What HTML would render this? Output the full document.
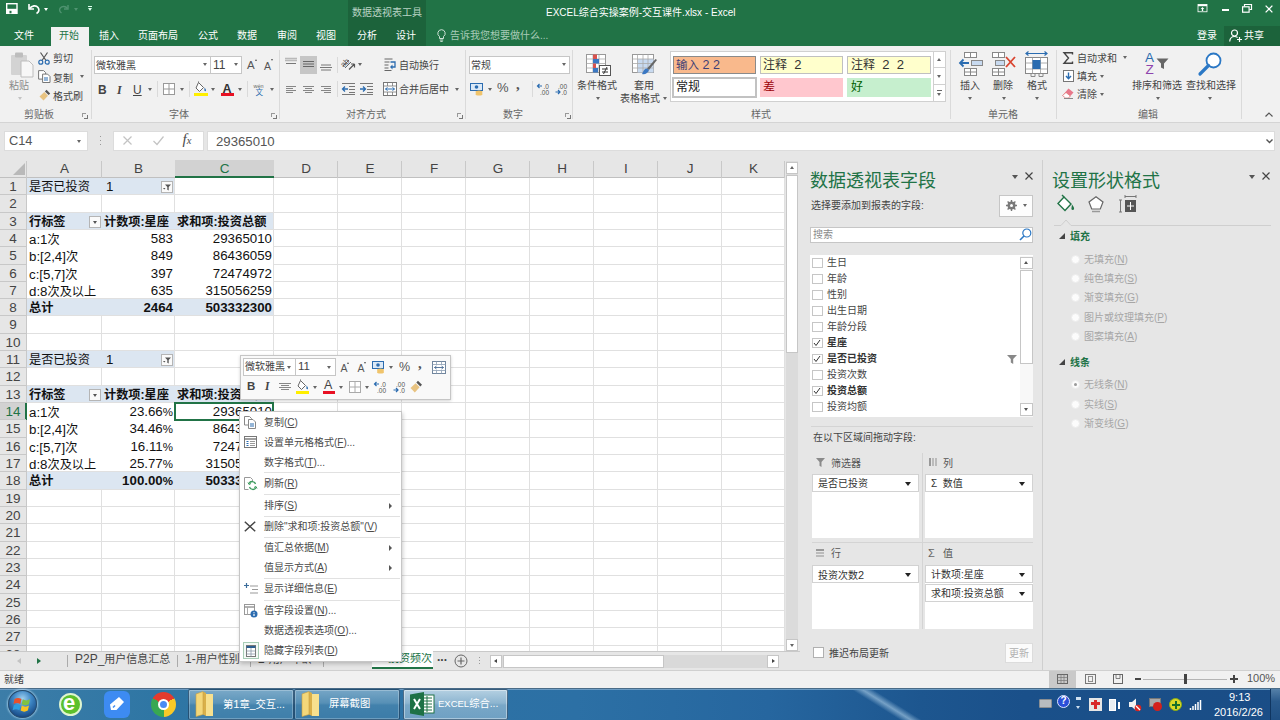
<!DOCTYPE html>
<html lang="zh-CN">
<head>
<meta charset="utf-8">
<title>EXCEL综合实操案例-交互课件.xlsx - Excel</title>
<style>
*{box-sizing:border-box;margin:0;padding:0}
html,body{width:1280px;height:720px;overflow:hidden;background:#e6e6e6}
body{position:relative;font-family:"Liberation Sans","Noto Sans CJK SC",sans-serif;font-size:11px;color:#333;line-height:1}
.a{position:absolute}
.t{position:absolute;white-space:nowrap;line-height:1}
.w{color:#fff}
svg{position:absolute;overflow:visible}
.l{font-size:109%}
/* title */
#title{left:0;top:0;width:1280px;height:46px;background:#217346}
#ctx{left:348px;top:0;width:78px;height:46px;background:#1c633b}
.tab{position:absolute;top:30px;color:#fff;font-size:10px;white-space:nowrap;line-height:12px}
#home{left:51px;top:27px;width:38px;height:20px;background:#f1f1f1}
/* ribbon */
#ribbon{left:0;top:46px;width:1280px;height:77px;background:#f1f1f1;border-bottom:1px solid #d4d4d4}
.rl{position:absolute;font-size:10px;color:#444;white-space:nowrap;line-height:14px}
.gl{position:absolute;font-size:10px;color:#666;white-space:nowrap;line-height:12px;top:109px}
.sep{position:absolute;top:50px;width:1px;height:69px;background:#dadada}
.dd{position:absolute;width:0;height:0;border-left:2.5px solid transparent;border-right:2.5px solid transparent;border-top:3px solid #666}
.launch{position:absolute;top:113px;width:4px;height:4px;border-left:1px solid #999;border-top:1px solid #999}
.launch:after{content:"";position:absolute;left:1px;top:1px;width:3px;height:3px;border-right:1px solid #777;border-bottom:1px solid #777}
</style>
</head>
<body>
<!-- ============ TITLE BAR ============ -->
<div id="title" class="a"></div>
<div id="ctx" class="a"></div>
<div class="t" style="left:352px;top:8px;font-size:10px;color:#b9d3c4">数据透视表工具</div>
<div class="t w" style="left:546px;top:8px;font-size:10px">EXCEL综合实操案例-交互课件.xlsx - Excel</div>
<!-- quick access -->
<svg style="left:6px;top:3px" width="12" height="11" viewBox="0 0 12 11"><rect x=".7" y=".7" width="10.300" height="9.600" fill="none" stroke="#fff" stroke-width="1.400"/><rect x=".7" y="5.800" width="10.300" height="4.500" fill="#fff"/><rect x="3.500" y="7.800" width="2" height="2.500" fill="#217346"/></svg>
<svg style="left:28px;top:3px" width="13" height="12" viewBox="0 0 13 12"><path d="M1 1v5h5" fill="none" stroke="#fff" stroke-width="1.6"/><path d="M1.5 5.5C4 2.5 8 2 10 4.5c1.6 2 1 4.5-1.5 6" fill="none" stroke="#fff" stroke-width="1.7"/></svg>
<div class="dd" style="left:44px;top:8px;border-top-color:#fff"></div>
<svg style="left:58px;top:4px" width="11" height="10" viewBox="0 0 11 10"><path d="M10 1v4h-4" fill="none" stroke="#4f9370" stroke-width="1.4"/><path d="M9.5 4.5C7.5 2 4 2 2.3 4c-1.3 1.7-.8 3.6 1.2 5" fill="none" stroke="#4f9370" stroke-width="1.4"/></svg>
<div class="dd" style="left:74px;top:8px;border-top-color:#4f9370"></div>
<div class="a" style="left:88px;top:6px;width:4px;height:1px;background:#dfe"></div>
<div class="dd" style="left:88px;top:8px;border-width:3px 2px 0 2px;border-top-color:#dfe"></div>
<!-- window buttons -->
<svg style="left:1197px;top:4px" width="11" height="9" viewBox="0 0 12 11"><rect x=".5" y=".5" width="11" height="9" fill="none" stroke="#fff" stroke-width="1"/><rect x=".5" y=".5" width="11" height="2.2" fill="#fff"/><path d="M6 3.8l2.2 2.4h-1.4v2.3h-1.6v-2.3h-1.4z" fill="#fff"/></svg>
<div class="a" style="left:1222px;top:9px;width:7px;height:2px;background:#fff"></div>
<svg style="left:1242px;top:3.500px" width="10" height="9" viewBox="0 0 10 9"><path d="M2.5 2.5v-2h7v5h-2" fill="none" stroke="#fff" stroke-width="1.2"/><rect x=".6" y="2.8" width="6.5" height="5.4" fill="none" stroke="#fff" stroke-width="1.2"/></svg>
<svg style="left:1265px;top:4.500px" width="8" height="8" viewBox="0 0 9 9"><path d="M.7 .7l7.6 7.6M8.3 .7l-7.6 7.6" stroke="#fff" stroke-width="1.5"/></svg>
<!-- tabs -->
<div id="home" class="a"></div>
<div class="tab" style="left:14px">文件</div>
<div class="tab" style="left:59px;color:#217346">开始</div>
<div class="tab" style="left:99px">插入</div>
<div class="tab" style="left:138px">页面布局</div>
<div class="tab" style="left:198px">公式</div>
<div class="tab" style="left:237px">数据</div>
<div class="tab" style="left:277px">审阅</div>
<div class="tab" style="left:316px">视图</div>
<div class="tab" style="left:357px">分析</div>
<div class="tab" style="left:396px">设计</div>
<svg style="left:437px;top:29px" width="9" height="13" viewBox="0 0 9 13"><path d="M4.5 .7a3.7 3.7 0 0 0-2 6.8v2h4v-2a3.7 3.7 0 0 0-2-6.8z" fill="none" stroke="#cfe3d7" stroke-width="1"/><path d="M2.8 11h3.4M3.3 12.4h2.4" stroke="#cfe3d7" stroke-width="1"/></svg>
<div class="tab" style="left:450px;color:#a9cbb8">告诉我您想要做什么...</div>
<div class="tab" style="left:1197px">登录</div>
<div class="a" style="left:1224px;top:26px;width:56px;height:20px;background:#1c633b"></div>
<svg style="left:1229px;top:29px" width="13" height="13" viewBox="0 0 13 13"><circle cx="5.5" cy="4" r="3" fill="none" stroke="#fff" stroke-width="1.2"/><path d="M.7 12.5c.3-3.4 2.3-5 4.8-5 1.3 0 2.3.4 3.100 1" fill="none" stroke="#fff" stroke-width="1.2"/><path d="M10.500 8v5M8 10.500h5" stroke="#fff" stroke-width="1.200"/></svg>
<div class="tab" style="left:1244px">共享</div>
<!-- ============ RIBBON ============ -->
<div id="ribbon" class="a"></div>
<!-- clipboard group -->
<svg style="left:10px;top:52px" width="24" height="26" viewBox="0 0 24 26"><rect x="1" y="3" width="16" height="20" rx="1" fill="#d3d3d3"/><rect x="5" y="0.500" width="8" height="5" rx="1" fill="#bdbdbd"/><path d="M11 9h8l4 4v12h-12z" fill="#f7f7f7" stroke="#bdbdbd" stroke-width="1"/></svg>
<div class="rl" style="left:9px;top:79px;color:#8a8a8a">粘贴</div>
<div class="dd" style="left:18px;top:97px;border-top-color:#c4c4c4"></div>
<svg style="left:38px;top:52px" width="12" height="13" viewBox="0 0 12 13"><path d="M2.500 .5l5.500 8M9.500 .5l-5.500 8" stroke="#555" stroke-width="1.2" fill="none"/><circle cx="2.800" cy="10.200" r="2" fill="none" stroke="#2b6cb0" stroke-width="1.2"/><circle cx="9.200" cy="10.200" r="2" fill="none" stroke="#2b6cb0" stroke-width="1.200"/></svg>
<div class="rl" style="left:53px;top:52px">剪切</div>
<svg style="left:38px;top:70px" width="13" height="13" viewBox="0 0 13 13"><path d="M.6 .6h5l2 2v6.500h-7z" fill="#fff" stroke="#777" stroke-width="1"/><path d="M4.600 4.100h5l2.400 2.400v6h-7.400z" fill="#fff" stroke="#777" stroke-width="1"/><path d="M6 8h4M6 10h4" stroke="#2b6cb0" stroke-width="1"/></svg>
<div class="rl" style="left:53px;top:71.500px">复制</div>
<div class="dd" style="left:80px;top:75px"></div>
<svg style="left:39px;top:89px" width="12" height="12" viewBox="0 0 12 12"><path d="M7.500 .8l3.700 3.700-1.600 1.600-3.700-3.700z" fill="#555"/><path d="M5.300 3l3.700 3.700-4.500 4.800-4-4z" fill="#e8c381"/></svg>
<div class="rl" style="left:53px;top:90px">格式刷</div>
<div class="gl" style="left:24px">剪贴板</div>
<div class="launch" style="left:82px"></div>
<div class="sep" style="left:91px"></div>
<!-- font group -->
<div class="a" style="left:94px;top:56px;width:117px;height:18px;background:#fff;border:1px solid #c6c6c6"></div>
<div class="rl" style="left:96px;top:59px">微软雅黑</div>
<div class="dd" style="left:203px;top:63px"></div>
<div class="a" style="left:210px;top:56px;width:32px;height:18px;background:#fff;border:1px solid #c6c6c6"></div>
<div class="rl" style="left:213px;top:58px;font-size:12px">11</div>
<div class="dd" style="left:234px;top:63px"></div>
<div class="rl" style="left:247px;top:58px;font-size:11.500px;color:#555">A</div><div class="a" style="left:254.500px;top:59px;border-left:1.500px solid transparent;border-right:1.500px solid transparent;border-bottom:2px solid #555"></div>
<div class="rl" style="left:264px;top:59px;font-size:10.500px;color:#555">A</div><div class="a" style="left:270.500px;top:59px;border-left:1.500px solid transparent;border-right:1.500px solid transparent;border-top:2px solid #555"></div>
<div class="rl" style="left:98px;top:83px;font-size:12px;font-weight:bold;color:#444">B</div>
<div class="rl" style="left:117px;top:83px;font-size:12px;font-style:italic;font-weight:bold;font-family:'Liberation Serif',serif;color:#444">I</div>
<div class="rl" style="left:133px;top:83px;font-size:12px;color:#444;text-decoration:underline">U</div>
<div class="dd" style="left:148px;top:88px"></div>
<div class="a" style="left:157px;top:81px;width:1px;height:16px;background:#dadada"></div>
<svg style="left:163px;top:83px" width="12" height="12" viewBox="0 0 12 12"><rect x=".5" y=".5" width="11" height="11" fill="#fff" stroke="#999"/><path d="M6 .5v11M.5 6h11" stroke="#999"/></svg>
<div class="dd" style="left:180px;top:88px"></div>
<div class="a" style="left:189px;top:81px;width:1px;height:16px;background:#dadada"></div>
<svg style="left:194px;top:81px" width="15" height="15" viewBox="0 0 15 15"><path d="M4.500 1.500l5 5-4 4-3.500-3.500z" fill="#fff" stroke="#666" stroke-width="1"/><path d="M4.500 1.500v-1" stroke="#666"/><path d="M10.500 6.500c1.500 1.800 2 2.800 1.200 3.500-.7.500-1.500 0-1.300-1z" fill="#2b6cb0"/><rect x="0" y="12" width="14" height="3" fill="#ffef00"/></svg>
<div class="dd" style="left:211px;top:88px"></div>
<div class="rl" style="left:222.500px;top:81.500px;font-size:12.500px;color:#333;font-weight:bold">A</div>
<div class="a" style="left:221px;top:93px;width:13px;height:3px;background:#e81123"></div>
<div class="dd" style="left:238px;top:88px"></div>
<div class="a" style="left:247px;top:81px;width:1px;height:16px;background:#dadada"></div>
<div class="t" style="left:253.500px;top:84px;font-size:5.500px;color:#666;line-height:5px">wén</div>
<div class="t" style="left:255.500px;top:88.500px;font-size:7.500px;color:#2b6cb0;line-height:8px">文</div>
<div class="dd" style="left:270px;top:88px"></div>
<div class="gl" style="left:169px">字体</div>
<div class="launch" style="left:271px"></div>
<div class="sep" style="left:279px"></div>
<!-- alignment group -->
<div class="a" style="left:300px;top:56px;width:17px;height:18px;background:#c6c6c6"></div>
<svg style="left:285px;top:57px" width="50" height="16" viewBox="0 0 50 16"><path d="M0 1.500h12M0 3.500h12" stroke="#b9b9b9" stroke-width="1.600"/><path d="M1 6.500h10" stroke="#777"/><path d="M18 4.500h11M18 7h11M18 9.500h11" stroke="#666"/><path d="M36 8h10M35 10.500h12M36 13h10" stroke="#777"/></svg>
<div class="a" style="left:337px;top:57px;width:1px;height:16px;background:#dadada"></div>
<svg style="left:342px;top:57px" width="14" height="14" viewBox="0 0 14 14"><path d="M1 9l6-6M3 11l6-6" stroke="#666" stroke-width="1"/><text x="0" y="9" font-size="8" font-family="Liberation Sans, sans-serif" fill="#555" transform="rotate(-45 3 8)">ab</text><path d="M7 12.500l5.500-5.500M12.500 7v3.500M12.500 7h-3.500" stroke="#555" stroke-width="1.200" fill="none"/></svg>
<div class="dd" style="left:358px;top:63px"></div>
<svg style="left:384px;top:58px" width="13" height="13" viewBox="0 0 13 13"><path d="M.5 1h8M.5 4h5M.5 7h4M.5 10h4M.5 12.500h7" stroke="#666"/><path d="M6.500 4h4.500v5h-4" fill="none" stroke="#2b6cb0" stroke-width="1.300"/><path d="M8.500 6.500l-2.500 2.500 2.500 2.500z" fill="#2b6cb0"/></svg>
<div class="rl" style="left:399px;top:59px">自动换行</div>
<svg style="left:286px;top:85px" width="46" height="9" viewBox="0 0 46 9"><path d="M0 1.500h10M0 3.500h7M0 5.500h10M0 7.500h7" stroke="#7a7a7a" stroke-width=".9"/><path d="M17 1.500h11M19 3.500h7M17 5.500h11M19 7.500h7" stroke="#7a7a7a" stroke-width=".9"/><path d="M35 1.500h10M38 3.500h7M35 5.500h10M38 7.500h7" stroke="#7a7a7a" stroke-width=".9"/></svg>
<div class="a" style="left:337px;top:81px;width:1px;height:16px;background:#dadada"></div>
<svg style="left:342px;top:83px" width="32" height="12" viewBox="0 0 32 12"><path d="M0 .5h13M7 3.500h6M7 6.500h6M7 9.500h6M0 11.500h13" stroke="#777"/><path d="M6 6h-5.500M3 3.500l-2.500 2.500 2.500 2.500" stroke="#2b6cb0" stroke-width="1.300" fill="none"/><path d="M18 .5h13M25 3.500h6M25 6.500h6M25 9.500h6M18 11.500h13" stroke="#777"/><path d="M18 6h5.500M21 3.500l2.500 2.500-2.500 2.500" stroke="#2b6cb0" stroke-width="1.300" fill="none"/></svg>
<svg style="left:383px;top:82px" width="14" height="14" viewBox="0 0 14 14"><rect x=".5" y=".5" width="13" height="13" fill="#fff" stroke="#777"/><path d="M.5 4h13M.5 10h13M4.500 .5v3.500M9.500 .5v3.500M4.500 10v3.500M9.500 10v3.500" stroke="#777" stroke-width=".8"/><path d="M2.500 7h9M4.500 5.500l-2 1.500 2 1.500M9.500 5.500l2 1.500-2 1.500" stroke="#2b6cb0" stroke-width="1" fill="none"/></svg>
<div class="rl" style="left:399px;top:83px">合并后居中</div>
<div class="dd" style="left:455px;top:88px"></div>
<div class="gl" style="left:346px">对齐方式</div>
<div class="launch" style="left:457px"></div>
<div class="sep" style="left:465px"></div>
<!-- number group -->
<div class="a" style="left:469px;top:56px;width:101px;height:18px;background:#fff;border:1px solid #c6c6c6"></div>
<div class="rl" style="left:471px;top:59px">常规</div>
<div class="dd" style="left:562px;top:63px"></div>
<svg style="left:470px;top:83px" width="14" height="13" viewBox="0 0 14 13"><rect x=".5" y=".5" width="12" height="7" fill="#dbe9f7" stroke="#2b6cb0"/><circle cx="6.500" cy="4" r="1.800" fill="#2b6cb0"/><ellipse cx="9" cy="9" rx="3.500" ry="1.500" fill="#f0c46c"/><ellipse cx="9" cy="11" rx="3.500" ry="1.500" fill="#f0c46c"/></svg>
<div class="dd" style="left:488px;top:88px"></div>
<div class="rl" style="left:497px;top:81px;font-size:13px;color:#555">%</div>
<div class="rl" style="left:516px;top:77px;font-size:15px;font-weight:bold;color:#555;font-family:'Liberation Serif',serif">,</div>
<div class="a" style="left:532px;top:81px;width:1px;height:16px;background:#dadada"></div>
<svg style="left:537px;top:83px" width="13" height="12" viewBox="0 0 13 12"><path d="M.5 3h4.500M2.500 1l-2 2 2 2" fill="none" stroke="#2b6cb0" stroke-width="1.200"/><text x="6.500" y="5.500" font-size="6.500" font-family="Liberation Sans, sans-serif" fill="#555">.0</text><text x="3" y="11.500" font-size="6.500" font-family="Liberation Sans, sans-serif" fill="#555">.00</text></svg>
<svg style="left:555px;top:83px" width="13" height="12" viewBox="0 0 13 12"><text x="3" y="5.500" font-size="6.500" font-family="Liberation Sans, sans-serif" fill="#555">.00</text><path d="M.5 9h4.500M3 7l2 2-2 2" fill="none" stroke="#2b6cb0" stroke-width="1.200"/><text x="6.500" y="11.500" font-size="6.500" font-family="Liberation Sans, sans-serif" fill="#555">.0</text></svg>
<div class="gl" style="left:503px">数字</div>
<div class="launch" style="left:565px"></div>
<div class="sep" style="left:572px"></div>
<!-- styles group -->
<svg style="left:586px;top:54px" width="26" height="22" viewBox="0 0 26 22"><rect x=".5" y=".5" width="19" height="18" fill="#fff" stroke="#999"/><path d="M.5 5h19M.5 9.500h19M.5 14h19M7 .5v18M13 .5v18" stroke="#aaa" stroke-width=".8"/><rect x="7" y=".5" width="4" height="4.500" fill="#d9534f"/><rect x="7" y="5" width="6" height="4.500" fill="#3b78c3"/><rect x="7" y="9.500" width="3" height="4.500" fill="#d9534f"/><rect x="7" y="14" width="5" height="4.500" fill="#3b78c3"/><rect x="13.500" y="11.500" width="11" height="10" fill="#fff" stroke="#555"/><path d="M16 15h6M16 18h6M21 13l-3.500 7" stroke="#333" stroke-width="1"/></svg>
<div class="rl" style="left:577px;top:79px">条件格式</div>
<div class="dd" style="left:596px;top:97px"></div>
<svg style="left:632px;top:54px" width="27" height="23" viewBox="0 0 27 23"><rect x=".5" y=".5" width="21" height="18" fill="#fff" stroke="#999"/><rect x="5.500" y="5" width="16" height="13.500" fill="#c8daf0"/><path d="M.5 5h21M.5 9.500h21M.5 14h21M5.500 .5v18M11 .5v18M16 .5v18" stroke="#aaa" stroke-width=".8"/><path d="M25 6l-8 10-2-1.500 8.500-9.500z" fill="#666"/><path d="M15 14.500c-2.500 0-3.500 2-5 5.500 3 .8 6-.8 7-4z" fill="#3b78c3"/></svg>
<div class="rl" style="left:634px;top:79px">套用</div>
<div class="rl" style="left:620px;top:92px">表格格式</div>
<div class="dd" style="left:663px;top:97px"></div>
<div class="a" style="left:670px;top:51px;width:276px;height:51px;background:#fff;border:1px solid #d0d0d0"></div>
<div class="a" style="left:673px;top:56px;width:83px;height:18px;background:#f9b98c;border:1px solid #8a8a8a"></div>
<div class="t" style="left:676px;top:59px;font-size:11.5px;color:#3f3f76">输入<span class="l"> 2 2</span></div>
<div class="a" style="left:760px;top:56px;width:83px;height:18px;background:#ffffcc;border:1px solid #c0c0c0"></div>
<div class="t" style="left:763px;top:58px;font-size:12px;color:#333">注释<span class="l">&nbsp; 2</span></div>
<div class="a" style="left:847px;top:56px;width:84px;height:18px;background:#ffffcc;border:1px solid #c0c0c0"></div>
<div class="t" style="left:851px;top:58px;font-size:12px;color:#333">注释<span class="l">&nbsp; 2&nbsp; 2</span></div>
<div class="a" style="left:672px;top:77px;width:85px;height:21px;background:#fff;border:2px solid #c2c2c2"></div>
<div class="t" style="left:676px;top:81px;font-size:12px;color:#222">常规</div>
<div class="a" style="left:760px;top:78px;width:83px;height:19px;background:#ffc7ce"></div>
<div class="t" style="left:763px;top:81px;font-size:12px;color:#9c0006">差</div>
<div class="a" style="left:847px;top:78px;width:84px;height:19px;background:#c6efce"></div>
<div class="t" style="left:851px;top:81px;font-size:12px;color:#006100">好</div>
<div class="a" style="left:933px;top:51px;width:13px;height:17px;background:#fff;border:1px solid #d0d0d0"></div>
<div class="a" style="left:933px;top:67px;width:13px;height:18px;background:#fff;border:1px solid #d0d0d0"></div>
<div class="a" style="left:933px;top:84px;width:13px;height:18px;background:#fff;border:1px solid #d0d0d0"></div>
<div class="a" style="left:937px;top:58px;border-left:2.500px solid transparent;border-right:2.500px solid transparent;border-bottom:3px solid #666"></div>
<div class="dd" style="left:937px;top:75px"></div>
<div class="a" style="left:937px;top:90px;width:5px;height:1px;background:#666"></div>
<div class="dd" style="left:937px;top:93px"></div>
<div class="gl" style="left:751px">样式</div>
<div class="sep" style="left:950px"></div>
<!-- cells group -->
<svg style="left:958px;top:52px" width="25" height="25" viewBox="0 0 25 25"><rect x="6.500" y=".5" width="12" height="5" fill="#fff" stroke="#888"/><path d="M12.500 .5v5" stroke="#888"/><rect x="13.500" y="8.500" width="11" height="5" fill="#c8daf0" stroke="#888"/><rect x="6.500" y="16.500" width="12" height="7" fill="#fff" stroke="#888"/><path d="M12.500 16.500v7M6.500 20h12" stroke="#888"/><path d="M11 11h-9M5.500 7.500l-3.500 3.500 3.500 3.500" fill="none" stroke="#2b6cb0" stroke-width="1.800"/></svg>
<div class="rl" style="left:960px;top:79px">插入</div>
<div class="dd" style="left:968px;top:97px"></div>
<svg style="left:992px;top:52px" width="25" height="25" viewBox="0 0 25 25"><rect x=".5" y=".5" width="12" height="5" fill="#fff" stroke="#888"/><path d="M6.500 .5v5" stroke="#888"/><rect x="3.500" y="8.500" width="9" height="5" fill="#c8daf0" stroke="#888"/><rect x=".5" y="16.500" width="12" height="7" fill="#fff" stroke="#888"/><path d="M6.500 16.500v7M.5 20h12" stroke="#888"/><path d="M14 5l9 10M23 5l-9 10" stroke="#d9442f" stroke-width="1.800"/></svg>
<div class="rl" style="left:993px;top:79px">删除</div>
<div class="dd" style="left:1002px;top:97px"></div>
<svg style="left:1025px;top:51px" width="24" height="26" viewBox="0 0 24 26"><path d="M1 2.500h21M3.500 .5l-2.500 2 2.500 2M19.500 .5l2.500 2-2.500 2" fill="none" stroke="#2b6cb0" stroke-width="1.200"/><rect x=".5" y="6.500" width="22" height="16" fill="#fff" stroke="#888"/><path d="M7.500 6.500v16M15.500 6.500v16M.5 12h22M.5 18h22" stroke="#999" stroke-width=".8"/><rect x="7.500" y="9" width="8" height="9" fill="#2b6cb0"/><path d="M6 22.500v3h4v-3M14 22.500v3h4v-3" fill="none" stroke="#888"/></svg>
<div class="rl" style="left:1027px;top:79px">格式</div>
<div class="dd" style="left:1035px;top:97px"></div>
<div class="gl" style="left:988px">单元格</div>
<div class="sep" style="left:1056px"></div>
<!-- editing group -->
<svg style="left:1063px;top:52px" width="10" height="12" viewBox="0 0 10 12"><path d="M9.500 2.500v-1.800h-8.500l4.500 5.300-4.500 5.300h8.500v-1.800" fill="none" stroke="#444" stroke-width="1.400"/></svg>
<div class="rl" style="left:1077px;top:52px">自动求和</div>
<div class="dd" style="left:1123px;top:56px"></div>
<svg style="left:1063px;top:70px" width="11" height="12" viewBox="0 0 11 12"><rect x=".5" y=".5" width="10" height="11" fill="#fff" stroke="#777"/><path d="M5.500 2.500v6M3 6l2.500 2.800 2.500-2.800" fill="none" stroke="#2b6cb0" stroke-width="1.400"/></svg>
<div class="rl" style="left:1077px;top:70px">填充</div>
<div class="dd" style="left:1100px;top:75px"></div>
<svg style="left:1062px;top:88px" width="12" height="11" viewBox="0 0 12 11"><path d="M6.500 .5l5 4-5 5.500h-3l-3-2.500z" fill="#e8788a"/><path d="M.5 7.500l3 2.500h3l1.800-2-4.300-3.500z" fill="#fff" stroke="#d66" stroke-width=".6"/><path d="M2 10.500h9" stroke="#888"/></svg>
<div class="rl" style="left:1077px;top:88px">清除</div>
<div class="dd" style="left:1100px;top:93px"></div>
<div class="t" style="left:1145px;top:51px;font-size:13.5px;color:#2b6cb0">A</div>
<div class="t" style="left:1145.5px;top:63px;font-size:13.5px;color:#8e44ad">Z</div>
<svg style="left:1156px;top:58px" width="14" height="12" viewBox="0 0 14 12"><path d="M.5 .5h12l-4.500 5v5.500l-3-1.500v-4z" fill="#666"/></svg>
<div class="rl" style="left:1132px;top:79px">排序和筛选</div>
<div class="dd" style="left:1156px;top:97px"></div>
<svg style="left:1198px;top:52px" width="25" height="24" viewBox="0 0 25 24"><circle cx="15.500" cy="8.500" r="7" fill="#fff" stroke="#2b78c5" stroke-width="1.800"/><path d="M10.500 13.500l-8.500 8.500" stroke="#2b78c5" stroke-width="3.200" stroke-linecap="round"/></svg>
<div class="rl" style="left:1186px;top:79px">查找和选择</div>
<div class="dd" style="left:1208px;top:97px"></div>
<div class="gl" style="left:1138px">编辑</div>
<div class="sep" style="left:1241px"></div>
<svg style="left:1265px;top:112px" width="8" height="5" viewBox="0 0 8 5"><path d="M.5 4.500l3.500-3.500 3.500 3.500" fill="none" stroke="#555" stroke-width="1.200"/></svg>
<!-- ============ FORMULA BAR ============ -->
<div class="a" style="left:4px;top:131px;width:84px;height:20px;background:#fff;border:1px solid #dcdcdc"></div>
<div class="t" style="left:9px;top:135px;font-size:12.8px;color:#555">C14</div>
<div class="dd" style="left:77px;top:140px"></div>
<div class="a" style="left:100px;top:136px;width:1px;height:1px;background:#999;box-shadow:0 4px 0 #999,0 8px 0 #999"></div>
<div class="a" style="left:113px;top:131px;width:91px;height:20px;background:#fff;border:1px solid #dcdcdc"></div>
<svg style="left:123px;top:136px" width="9" height="9" viewBox="0 0 9 9"><path d="M.5 .5l8 8M8.500 .5l-8 8" stroke="#c3c3c3" stroke-width="1.200"/></svg>
<svg style="left:153px;top:136px" width="11" height="9" viewBox="0 0 11 9"><path d="M.5 5l3.500 3.500 6.500-8" fill="none" stroke="#c3c3c3" stroke-width="1.200"/></svg>
<div class="t" style="left:182.500px;top:132px;font-size:15px;font-style:italic;font-family:'Liberation Serif',serif;color:#4a4a4a">f<span style="font-size:10.500px">x</span></div>
<div class="a" style="left:207px;top:131px;width:1068px;height:20px;background:#fff;border:1px solid #dcdcdc"></div>
<div class="t" style="left:216px;top:135px;font-size:13.2px;color:#555">29365010</div>
<svg style="left:1266px;top:139px" width="7" height="5" viewBox="0 0 7 5"><path d="M.5 .5l3 3 3-3" fill="none" stroke="#555" stroke-width="1.400"/></svg>
<!-- ============ GRID ============ -->
<div class="a" style="left:0;top:160px;width:785px;height:491px;background:#fff;overflow:hidden">
<div class="a" style="left:27px;top:17.9px;width:148px;height:17.32px;background:#dce6f1;"></div>
<div class="a" style="left:27px;top:52.54px;width:247px;height:17.32px;background:#dce6f1;border-bottom:1px solid #95b3d7"></div>
<div class="a" style="left:27px;top:139.14px;width:247px;height:17.32px;background:#dce6f1;border-top:1px solid #95b3d7"></div>
<div class="a" style="left:27px;top:191.1px;width:148px;height:17.32px;background:#dce6f1;"></div>
<div class="a" style="left:27px;top:225.74px;width:247px;height:17.32px;background:#dce6f1;border-bottom:1px solid #95b3d7"></div>
<div class="a" style="left:27px;top:312.34px;width:247px;height:17.32px;background:#dce6f1;border-top:1px solid #95b3d7"></div>
<div class="a" style="left:27px;top:34.22px;width:758px;height:1px;background:#e0e0e0"></div>
<div class="a" style="left:27px;top:51.54px;width:758px;height:1px;background:#e0e0e0"></div>
<div class="a" style="left:27px;top:68.86px;width:758px;height:1px;background:#e0e0e0"></div>
<div class="a" style="left:27px;top:86.18px;width:758px;height:1px;background:#e0e0e0"></div>
<div class="a" style="left:27px;top:103.5px;width:758px;height:1px;background:#e0e0e0"></div>
<div class="a" style="left:27px;top:120.82px;width:758px;height:1px;background:#e0e0e0"></div>
<div class="a" style="left:27px;top:138.14px;width:758px;height:1px;background:#e0e0e0"></div>
<div class="a" style="left:27px;top:155.46px;width:758px;height:1px;background:#e0e0e0"></div>
<div class="a" style="left:27px;top:172.78px;width:758px;height:1px;background:#e0e0e0"></div>
<div class="a" style="left:27px;top:190.1px;width:758px;height:1px;background:#e0e0e0"></div>
<div class="a" style="left:27px;top:207.42px;width:758px;height:1px;background:#e0e0e0"></div>
<div class="a" style="left:27px;top:224.74px;width:758px;height:1px;background:#e0e0e0"></div>
<div class="a" style="left:27px;top:242.06px;width:758px;height:1px;background:#e0e0e0"></div>
<div class="a" style="left:27px;top:259.38px;width:758px;height:1px;background:#e0e0e0"></div>
<div class="a" style="left:27px;top:276.7px;width:758px;height:1px;background:#e0e0e0"></div>
<div class="a" style="left:27px;top:294.02px;width:758px;height:1px;background:#e0e0e0"></div>
<div class="a" style="left:27px;top:311.34px;width:758px;height:1px;background:#e0e0e0"></div>
<div class="a" style="left:27px;top:328.66px;width:758px;height:1px;background:#e0e0e0"></div>
<div class="a" style="left:27px;top:345.98px;width:758px;height:1px;background:#e0e0e0"></div>
<div class="a" style="left:27px;top:363.3px;width:758px;height:1px;background:#e0e0e0"></div>
<div class="a" style="left:27px;top:380.62px;width:758px;height:1px;background:#e0e0e0"></div>
<div class="a" style="left:27px;top:397.94px;width:758px;height:1px;background:#e0e0e0"></div>
<div class="a" style="left:27px;top:415.26px;width:758px;height:1px;background:#e0e0e0"></div>
<div class="a" style="left:27px;top:432.58px;width:758px;height:1px;background:#e0e0e0"></div>
<div class="a" style="left:27px;top:449.9px;width:758px;height:1px;background:#e0e0e0"></div>
<div class="a" style="left:27px;top:467.22px;width:758px;height:1px;background:#e0e0e0"></div>
<div class="a" style="left:27px;top:484.54px;width:758px;height:1px;background:#e0e0e0"></div>
<div class="a" style="left:27px;top:501.86px;width:758px;height:1px;background:#e0e0e0"></div>
<div class="a" style="left:101px;top:17.9px;width:1px;height:480px;background:#e0e0e0"></div>
<div class="a" style="left:174px;top:17.9px;width:1px;height:480px;background:#e0e0e0"></div>
<div class="a" style="left:273px;top:17.9px;width:1px;height:480px;background:#e0e0e0"></div>
<div class="a" style="left:337px;top:17.9px;width:1px;height:480px;background:#e0e0e0"></div>
<div class="a" style="left:401px;top:17.9px;width:1px;height:480px;background:#e0e0e0"></div>
<div class="a" style="left:465px;top:17.9px;width:1px;height:480px;background:#e0e0e0"></div>
<div class="a" style="left:529px;top:17.9px;width:1px;height:480px;background:#e0e0e0"></div>
<div class="a" style="left:593px;top:17.9px;width:1px;height:480px;background:#e0e0e0"></div>
<div class="a" style="left:657px;top:17.9px;width:1px;height:480px;background:#e0e0e0"></div>
<div class="a" style="left:721px;top:17.9px;width:1px;height:480px;background:#e0e0e0"></div>
<div class="a" style="left:784px;top:17.9px;width:1px;height:480px;background:#e0e0e0"></div>
<div class="a" style="left:27px;top:17.9px;width:147px;height:16.32px;background:#dce6f1;"></div>
<div class="a" style="left:27px;top:52.54px;width:246px;height:16.32px;background:#dce6f1;"></div>
<div class="a" style="left:27px;top:139.14px;width:246px;height:16.32px;background:#dce6f1;"></div>
<div class="a" style="left:27px;top:191.1px;width:147px;height:16.32px;background:#dce6f1;"></div>
<div class="a" style="left:27px;top:225.74px;width:246px;height:16.32px;background:#dce6f1;"></div>
<div class="a" style="left:27px;top:312.34px;width:246px;height:16.32px;background:#dce6f1;"></div>
<div class="a" style="left:27px;top:69.86px;width:246px;height:68.28px;background:#fff"></div>
<div class="a" style="left:27px;top:243.06px;width:246px;height:68.28px;background:#fff"></div>
<div class="a" style="left:0;top:0;width:785px;height:17.9px;background:#e6e6e6;border-bottom:1px solid #c0c0c0"></div>
<div class="a" style="left:175px;top:0;width:99px;height:17.9px;background:#d2d2d2;border-bottom:2px solid #217346"></div>
<div class="t" style="left:27px;width:75px;text-align:center;top:1.5px;font-size:13.5px;color:#444">A</div>
<div class="a" style="left:101px;top:1px;width:1px;height:16.9px;background:#c8c8c8"></div>
<div class="t" style="left:102px;width:73px;text-align:center;top:1.5px;font-size:13.5px;color:#444">B</div>
<div class="t" style="left:175px;width:99px;text-align:center;top:1.5px;font-size:13.5px;color:#217346">C</div>
<div class="t" style="left:274px;width:64px;text-align:center;top:1.5px;font-size:13.5px;color:#444">D</div>
<div class="a" style="left:337px;top:1px;width:1px;height:16.9px;background:#c8c8c8"></div>
<div class="t" style="left:338px;width:64px;text-align:center;top:1.5px;font-size:13.5px;color:#444">E</div>
<div class="a" style="left:401px;top:1px;width:1px;height:16.9px;background:#c8c8c8"></div>
<div class="t" style="left:402px;width:64px;text-align:center;top:1.5px;font-size:13.5px;color:#444">F</div>
<div class="a" style="left:465px;top:1px;width:1px;height:16.9px;background:#c8c8c8"></div>
<div class="t" style="left:466px;width:64px;text-align:center;top:1.5px;font-size:13.5px;color:#444">G</div>
<div class="a" style="left:529px;top:1px;width:1px;height:16.9px;background:#c8c8c8"></div>
<div class="t" style="left:530px;width:64px;text-align:center;top:1.5px;font-size:13.5px;color:#444">H</div>
<div class="a" style="left:593px;top:1px;width:1px;height:16.9px;background:#c8c8c8"></div>
<div class="t" style="left:594px;width:64px;text-align:center;top:1.5px;font-size:13.5px;color:#444">I</div>
<div class="a" style="left:657px;top:1px;width:1px;height:16.9px;background:#c8c8c8"></div>
<div class="t" style="left:658px;width:64px;text-align:center;top:1.5px;font-size:13.5px;color:#444">J</div>
<div class="a" style="left:721px;top:1px;width:1px;height:16.9px;background:#c8c8c8"></div>
<div class="t" style="left:722px;width:63px;text-align:center;top:1.5px;font-size:13.5px;color:#444">K</div>
<div class="a" style="left:784px;top:1px;width:1px;height:16.9px;background:#c8c8c8"></div>
<svg style="left:13px;top:3px" width="12" height="12" viewBox="0 0 12 12"><path d="M12 0v12h-12z" fill="#b9b9b9"/></svg><div class="a" style="left:26px;top:1px;width:1px;height:17px;background:#c8c8c8"></div>
<div class="a" style="left:0;top:17.9px;width:27px;height:480px;background:#e6e6e6;border-right:1px solid #c8c8c8"></div>
<div class="a" style="left:0;top:243.06px;width:27px;height:17.32px;background:#d2d2d2;border-right:2px solid #217346"></div>
<div class="t" style="left:0;width:26px;text-align:center;top:19.9px;font-size:13.5px;color:#444">1</div>
<div class="a" style="left:0;top:34.22px;width:26px;height:1px;background:#c8c8c8"></div>
<div class="t" style="left:0;width:26px;text-align:center;top:37.22px;font-size:13.5px;color:#444">2</div>
<div class="a" style="left:0;top:51.54px;width:26px;height:1px;background:#c8c8c8"></div>
<div class="t" style="left:0;width:26px;text-align:center;top:54.54px;font-size:13.5px;color:#444">3</div>
<div class="a" style="left:0;top:68.86px;width:26px;height:1px;background:#c8c8c8"></div>
<div class="t" style="left:0;width:26px;text-align:center;top:71.86px;font-size:13.5px;color:#444">4</div>
<div class="a" style="left:0;top:86.18px;width:26px;height:1px;background:#c8c8c8"></div>
<div class="t" style="left:0;width:26px;text-align:center;top:89.18px;font-size:13.5px;color:#444">5</div>
<div class="a" style="left:0;top:103.5px;width:26px;height:1px;background:#c8c8c8"></div>
<div class="t" style="left:0;width:26px;text-align:center;top:106.5px;font-size:13.5px;color:#444">6</div>
<div class="a" style="left:0;top:120.82px;width:26px;height:1px;background:#c8c8c8"></div>
<div class="t" style="left:0;width:26px;text-align:center;top:123.82px;font-size:13.5px;color:#444">7</div>
<div class="a" style="left:0;top:138.14px;width:26px;height:1px;background:#c8c8c8"></div>
<div class="t" style="left:0;width:26px;text-align:center;top:141.14px;font-size:13.5px;color:#444">8</div>
<div class="a" style="left:0;top:155.46px;width:26px;height:1px;background:#c8c8c8"></div>
<div class="t" style="left:0;width:26px;text-align:center;top:158.46px;font-size:13.5px;color:#444">9</div>
<div class="a" style="left:0;top:172.78px;width:26px;height:1px;background:#c8c8c8"></div>
<div class="t" style="left:0;width:26px;text-align:center;top:175.78px;font-size:13.5px;color:#444">10</div>
<div class="a" style="left:0;top:190.1px;width:26px;height:1px;background:#c8c8c8"></div>
<div class="t" style="left:0;width:26px;text-align:center;top:193.1px;font-size:13.5px;color:#444">11</div>
<div class="a" style="left:0;top:207.42px;width:26px;height:1px;background:#c8c8c8"></div>
<div class="t" style="left:0;width:26px;text-align:center;top:210.42px;font-size:13.5px;color:#444">12</div>
<div class="a" style="left:0;top:224.74px;width:26px;height:1px;background:#c8c8c8"></div>
<div class="t" style="left:0;width:26px;text-align:center;top:227.74px;font-size:13.5px;color:#444">13</div>
<div class="a" style="left:0;top:242.06px;width:26px;height:1px;background:#c8c8c8"></div>
<div class="t" style="left:0;width:26px;text-align:center;top:245.06px;font-size:13.5px;color:#217346">14</div>
<div class="a" style="left:0;top:259.38px;width:26px;height:1px;background:#c8c8c8"></div>
<div class="t" style="left:0;width:26px;text-align:center;top:262.38px;font-size:13.5px;color:#444">15</div>
<div class="a" style="left:0;top:276.7px;width:26px;height:1px;background:#c8c8c8"></div>
<div class="t" style="left:0;width:26px;text-align:center;top:279.7px;font-size:13.5px;color:#444">16</div>
<div class="a" style="left:0;top:294.02px;width:26px;height:1px;background:#c8c8c8"></div>
<div class="t" style="left:0;width:26px;text-align:center;top:297.02px;font-size:13.5px;color:#444">17</div>
<div class="a" style="left:0;top:311.34px;width:26px;height:1px;background:#c8c8c8"></div>
<div class="t" style="left:0;width:26px;text-align:center;top:314.34px;font-size:13.5px;color:#444">18</div>
<div class="a" style="left:0;top:328.66px;width:26px;height:1px;background:#c8c8c8"></div>
<div class="t" style="left:0;width:26px;text-align:center;top:331.66px;font-size:13.5px;color:#444">19</div>
<div class="a" style="left:0;top:345.98px;width:26px;height:1px;background:#c8c8c8"></div>
<div class="t" style="left:0;width:26px;text-align:center;top:348.98px;font-size:13.5px;color:#444">20</div>
<div class="a" style="left:0;top:363.3px;width:26px;height:1px;background:#c8c8c8"></div>
<div class="t" style="left:0;width:26px;text-align:center;top:366.3px;font-size:13.5px;color:#444">21</div>
<div class="a" style="left:0;top:380.62px;width:26px;height:1px;background:#c8c8c8"></div>
<div class="t" style="left:0;width:26px;text-align:center;top:383.62px;font-size:13.5px;color:#444">22</div>
<div class="a" style="left:0;top:397.94px;width:26px;height:1px;background:#c8c8c8"></div>
<div class="t" style="left:0;width:26px;text-align:center;top:400.94px;font-size:13.5px;color:#444">23</div>
<div class="a" style="left:0;top:415.26px;width:26px;height:1px;background:#c8c8c8"></div>
<div class="t" style="left:0;width:26px;text-align:center;top:418.26px;font-size:13.5px;color:#444">24</div>
<div class="a" style="left:0;top:432.58px;width:26px;height:1px;background:#c8c8c8"></div>
<div class="t" style="left:0;width:26px;text-align:center;top:435.58px;font-size:13.5px;color:#444">25</div>
<div class="a" style="left:0;top:449.9px;width:26px;height:1px;background:#c8c8c8"></div>
<div class="t" style="left:0;width:26px;text-align:center;top:452.9px;font-size:13.5px;color:#444">26</div>
<div class="a" style="left:0;top:467.22px;width:26px;height:1px;background:#c8c8c8"></div>
<div class="t" style="left:0;width:26px;text-align:center;top:470.22px;font-size:13.5px;color:#444">27</div>
<div class="a" style="left:0;top:484.54px;width:26px;height:1px;background:#c8c8c8"></div>
<div class="t" style="left:0;width:26px;text-align:center;top:487.54px;font-size:13.5px;color:#444">28</div>
<div class="a" style="left:0;top:501.86px;width:26px;height:1px;background:#c8c8c8"></div>
<div class="t" style="top:20.9px;font-size:12.2px;color:#111;left:29px;">是否已投资</div>
<div class="t" style="top:19.9px;font-size:13.3px;color:#111;left:106px;">1</div>
<div class="a" style="left:161px;top:20.9px;width:12px;height:12px;background:#fafafa;border:1px solid #b5b5b5"></div>
<svg style="left:163px;top:23.9px" width="8" height="7" viewBox="0 0 8 7"><path d="M2 .5h6l-2.300 2.500v3.500l-1.400-.8v-2.700z" fill="#555"/><path d="M0 4h2.500l-1.250 1.500z" fill="#555"/></svg>
<div class="t" style="top:55.54px;font-size:12.2px;color:#111;font-weight:bold;left:29px;">行标签</div>
<div class="a" style="left:89px;top:55.54px;width:12px;height:12px;background:#fafafa;border:1px solid #b5b5b5"></div>
<div class="dd" style="left:93px;top:60.54px;border-width:3px 2px 0 2px;border-top-color:#555"></div>
<div class="t" style="top:55.54px;font-size:12.2px;color:#111;font-weight:bold;left:104px;">计数项:星座</div>
<div class="t" style="top:55.54px;font-size:12.2px;color:#111;font-weight:bold;left:177px;">求和项:投资总额</div>
<div class="t" style="top:72.86px;font-size:12.2px;color:#111;left:29px;"><span class="l">a:1</span>次</div>
<div class="t" style="top:71.86px;font-size:13.3px;color:#111;right:612px;">583</div>
<div class="t" style="top:71.86px;font-size:13.3px;color:#111;right:513px;">29365010</div>
<div class="t" style="top:90.18px;font-size:12.2px;color:#111;left:29px;"><span class="l">b:[2,4]</span>次</div>
<div class="t" style="top:89.18px;font-size:13.3px;color:#111;right:612px;">849</div>
<div class="t" style="top:89.18px;font-size:13.3px;color:#111;right:513px;">86436059</div>
<div class="t" style="top:107.5px;font-size:12.2px;color:#111;left:29px;"><span class="l">c:[5,7]</span>次</div>
<div class="t" style="top:106.5px;font-size:13.3px;color:#111;right:612px;">397</div>
<div class="t" style="top:106.5px;font-size:13.3px;color:#111;right:513px;">72474972</div>
<div class="t" style="top:124.82px;font-size:12.2px;color:#111;left:29px;"><span class="l">d:8</span>次及以上</div>
<div class="t" style="top:123.82px;font-size:13.3px;color:#111;right:612px;">635</div>
<div class="t" style="top:123.82px;font-size:13.3px;color:#111;right:513px;">315056259</div>
<div class="t" style="top:142.14px;font-size:12.2px;color:#111;font-weight:bold;left:29px;">总计</div>
<div class="t" style="top:141.14px;font-size:13.3px;color:#111;font-weight:bold;right:612px;">2464</div>
<div class="t" style="top:141.14px;font-size:13.3px;color:#111;font-weight:bold;right:513px;">503332300</div>
<div class="t" style="top:194.1px;font-size:12.2px;color:#111;left:29px;">是否已投资</div>
<div class="t" style="top:193.1px;font-size:13.3px;color:#111;left:106px;">1</div>
<div class="a" style="left:161px;top:194.1px;width:12px;height:12px;background:#fafafa;border:1px solid #b5b5b5"></div>
<svg style="left:163px;top:197.1px" width="8" height="7" viewBox="0 0 8 7"><path d="M2 .5h6l-2.300 2.500v3.500l-1.400-.8v-2.700z" fill="#555"/><path d="M0 4h2.500l-1.250 1.500z" fill="#555"/></svg>
<div class="t" style="top:228.74px;font-size:12.2px;color:#111;font-weight:bold;left:29px;">行标签</div>
<div class="a" style="left:89px;top:228.74px;width:12px;height:12px;background:#fafafa;border:1px solid #b5b5b5"></div>
<div class="dd" style="left:93px;top:233.74px;border-width:3px 2px 0 2px;border-top-color:#555"></div>
<div class="t" style="top:228.74px;font-size:12.2px;color:#111;font-weight:bold;left:104px;">计数项:星座</div>
<div class="t" style="top:228.74px;font-size:12.2px;color:#111;font-weight:bold;left:177px;">求和项:投资总额</div>
<div class="t" style="top:246.06px;font-size:12.2px;color:#111;left:29px;"><span class="l">a:1</span>次</div>
<div class="t" style="top:245.06px;font-size:13.3px;color:#111;right:612px;">23.66<span style="font-size:11.500px">%</span></div>
<div class="t" style="top:245.06px;font-size:13.3px;color:#111;right:513px;">29365010</div>
<div class="t" style="top:263.38px;font-size:12.2px;color:#111;left:29px;"><span class="l">b:[2,4]</span>次</div>
<div class="t" style="top:262.38px;font-size:13.3px;color:#111;right:612px;">34.46<span style="font-size:11.500px">%</span></div>
<div class="t" style="top:262.38px;font-size:13.3px;color:#111;right:513px;">86436059</div>
<div class="t" style="top:280.7px;font-size:12.2px;color:#111;left:29px;"><span class="l">c:[5,7]</span>次</div>
<div class="t" style="top:279.7px;font-size:13.3px;color:#111;right:612px;">16.11<span style="font-size:11.500px">%</span></div>
<div class="t" style="top:279.7px;font-size:13.3px;color:#111;right:513px;">72474972</div>
<div class="t" style="top:298.02px;font-size:12.2px;color:#111;left:29px;"><span class="l">d:8</span>次及以上</div>
<div class="t" style="top:297.02px;font-size:13.3px;color:#111;right:612px;">25.77<span style="font-size:11.500px">%</span></div>
<div class="t" style="top:297.02px;font-size:13.3px;color:#111;right:513px;">315056259</div>
<div class="t" style="top:315.34px;font-size:12.2px;color:#111;font-weight:bold;left:29px;">总计</div>
<div class="t" style="top:314.34px;font-size:13.3px;color:#111;font-weight:bold;right:612px;">100.00<span style="font-size:11.500px">%</span></div>
<div class="t" style="top:314.34px;font-size:13.3px;color:#111;font-weight:bold;right:513px;">503332300</div>
<div class="a" style="left:174px;top:242.06px;width:100px;height:19.32px;border:2px solid #217346"></div>
</div>
<div class="a" style="left:786px;top:161px;width:12px;height:490px;background:#dbdbdb"></div>
<div class="a" style="left:786px;top:162px;width:12px;height:12px;background:#fff;border:1px solid #c6c6c6"></div>
<div class="a" style="left:789.500px;top:166px;border-left:2.500px solid transparent;border-right:2.500px solid transparent;border-bottom:3px solid #666"></div>
<div class="a" style="left:786px;top:175px;width:12px;height:178px;background:#fff;border:1px solid #c6c6c6"></div>
<div class="a" style="left:786px;top:639px;width:12px;height:12px;background:#fff;border:1px solid #c6c6c6"></div>
<div class="dd" style="left:789.500px;top:644px"></div>
<!-- ============ PIVOT FIELDS PANEL ============ -->
<div class="a" style="left:1042px;top:160px;width:1px;height:510px;background:#cfcfcf"></div>
<div class="t" style="left:810px;top:172px;font-size:18px;color:#217346;font-weight:400">数据透视表字段</div>
<div class="dd" style="left:1012px;top:175px;border-width:4px 3.500px 0 3.500px;border-top-color:#555"></div>
<svg style="left:1025px;top:172px" width="8" height="8" viewBox="0 0 8 8"><path d="M.5 .5l7 7M7.500 .5l-7 7" stroke="#444" stroke-width="1.200"/></svg>
<div class="t" style="left:811px;top:201px;font-size:10px;color:#444">选择要添加到报表的字段:</div>
<div class="a" style="left:999px;top:195px;width:34px;height:22px;background:#fdfdfd;border:1px solid #c6c6c6"></div>
<svg style="left:1006px;top:200px" width="11" height="11" viewBox="0 0 11 11"><circle cx="5.500" cy="5.500" r="3" fill="none" stroke="#777" stroke-width="2"/><path d="M5.500 0v11M0 5.500h11M1.600 1.600l7.800 7.800M9.400 1.600l-7.800 7.800" stroke="#777" stroke-width="1.400"/><circle cx="5.500" cy="5.500" r="1.500" fill="#fdfdfd"/></svg>
<div class="dd" style="left:1023px;top:204px"></div>
<div class="a" style="left:810px;top:227px;width:223px;height:16px;background:#fff;border:1px solid #c6c6c6"></div>
<div class="t" style="left:813px;top:230px;font-size:10px;color:#8a8a8a">搜索</div>
<svg style="left:1019px;top:228px" width="13" height="13" viewBox="0 0 13 13"><circle cx="7.800" cy="5" r="4" fill="none" stroke="#2b78c5" stroke-width="1.200"/><path d="M5 8l-4 4" stroke="#2b78c5" stroke-width="1.600"/></svg>
<div class="a" style="left:810px;top:255px;width:223px;height:162px;background:#fff"></div>
<div class="a" style="left:812px;top:257.5px;width:10.500px;height:10.500px;background:#fff;border:1px solid #c6c6c6"></div>
<div class="t" style="left:827px;top:257.5px;font-size:10px;color:#444;">生日</div>
<div class="a" style="left:812px;top:273.5px;width:10.500px;height:10.500px;background:#fff;border:1px solid #c6c6c6"></div>
<div class="t" style="left:827px;top:273.5px;font-size:10px;color:#444;">年龄</div>
<div class="a" style="left:812px;top:289.5px;width:10.500px;height:10.500px;background:#fff;border:1px solid #c6c6c6"></div>
<div class="t" style="left:827px;top:289.5px;font-size:10px;color:#444;">性别</div>
<div class="a" style="left:812px;top:305.5px;width:10.500px;height:10.500px;background:#fff;border:1px solid #c6c6c6"></div>
<div class="t" style="left:827px;top:305.5px;font-size:10px;color:#444;">出生日期</div>
<div class="a" style="left:812px;top:321.5px;width:10.500px;height:10.500px;background:#fff;border:1px solid #c6c6c6"></div>
<div class="t" style="left:827px;top:321.5px;font-size:10px;color:#444;">年龄分段</div>
<div class="a" style="left:812px;top:337.5px;width:10.500px;height:10.500px;background:#fff;border:1px solid #c6c6c6"></div>
<svg style="left:813px;top:338.5px" width="8" height="8" viewBox="0 0 8 8"><path d="M1 4l2 2.500 4-5.500" fill="none" stroke="#333" stroke-width="1"/></svg>
<div class="t" style="left:827px;top:337.5px;font-size:10px;font-weight:bold;color:#333;">星座</div>
<div class="a" style="left:812px;top:353.5px;width:10.500px;height:10.500px;background:#fff;border:1px solid #c6c6c6"></div>
<svg style="left:813px;top:354.5px" width="8" height="8" viewBox="0 0 8 8"><path d="M1 4l2 2.500 4-5.500" fill="none" stroke="#333" stroke-width="1"/></svg>
<div class="t" style="left:827px;top:353.5px;font-size:10px;font-weight:bold;color:#333;">是否已投资</div>
<svg style="left:1007px;top:354.5px" width="10" height="9" viewBox="0 0 10 9"><path d="M0 0h10l-3.800 4v5l-2.400-1.500v-3.500z" fill="#888"/></svg>
<div class="a" style="left:812px;top:369.5px;width:10.500px;height:10.500px;background:#fff;border:1px solid #c6c6c6"></div>
<div class="t" style="left:827px;top:369.5px;font-size:10px;color:#444;">投资次数</div>
<div class="a" style="left:812px;top:385.5px;width:10.500px;height:10.500px;background:#fff;border:1px solid #c6c6c6"></div>
<svg style="left:813px;top:386.5px" width="8" height="8" viewBox="0 0 8 8"><path d="M1 4l2 2.500 4-5.500" fill="none" stroke="#333" stroke-width="1"/></svg>
<div class="t" style="left:827px;top:385.5px;font-size:10px;font-weight:bold;color:#333;">投资总额</div>
<div class="a" style="left:812px;top:401.5px;width:10.500px;height:10.500px;background:#fff;border:1px solid #c6c6c6"></div>
<div class="t" style="left:827px;top:401.5px;font-size:10px;color:#444;">投资均额</div>
<div class="a" style="left:1020px;top:256px;width:13px;height:161px;background:#f8f8f8"></div>
<div class="a" style="left:1020px;top:257px;width:13px;height:12px;background:#fff;border:1px solid #c6c6c6"></div>
<div class="a" style="left:1024px;top:261px;border-left:2.500px solid transparent;border-right:2.500px solid transparent;border-bottom:3px solid #555"></div>
<div class="a" style="left:1020px;top:270px;width:13px;height:94px;background:#fff;border:1px solid #c6c6c6"></div>
<div class="a" style="left:1020px;top:403px;width:13px;height:13px;background:#fff;border:1px solid #c6c6c6"></div>
<div class="dd" style="left:1024px;top:408px;border-top-color:#555"></div>
<div class="a" style="left:811px;top:426px;width:222px;height:1px;background:#d4d4d4"></div>
<div class="t" style="left:813px;top:433px;font-size:10px;color:#444">在以下区域间拖动字段:</div>
<svg style="left:816px;top:458px" width="9" height="9" viewBox="0 0 9 9"><path d="M0 0h9l-3.500 4v5l-2-1.300v-3.700z" fill="#8a8a8a"/></svg>
<div class="t" style="left:831px;top:458.500px;font-size:10px;color:#555">筛选器</div>
<div class="a" style="left:929px;top:458px;width:2px;height:8px;background:#999;box-shadow:3px 0 0 #bbb,6px 0 0 #bbb"></div>
<div class="t" style="left:943px;top:458.500px;font-size:10px;color:#555">列</div>
<div class="a" style="left:922px;top:453px;width:1px;height:176px;background:#d4d4d4"></div>
<div class="a" style="left:812px;top:542px;width:221px;height:1px;background:#d4d4d4"></div>
<div class="a" style="left:816px;top:549px;width:8px;height:2px;background:#999;box-shadow:0 3px 0 #bbb,0 6px 0 #bbb"></div>
<div class="t" style="left:831px;top:549px;font-size:10px;color:#555">行</div>
<div class="t" style="left:928px;top:548px;font-size:11px;color:#666">Σ</div>
<div class="t" style="left:943px;top:549px;font-size:10px;color:#555">值</div>
<div class="a" style="left:812px;top:474px;width:107px;height:64px;background:#fff"></div>
<div class="a" style="left:925px;top:474px;width:108px;height:64px;background:#fff"></div>
<div class="a" style="left:812px;top:565px;width:107px;height:64px;background:#fff"></div>
<div class="a" style="left:925px;top:565px;width:108px;height:64px;background:#fff"></div>
<div class="a" style="left:812px;top:474px;width:107px;height:18px;background:#fff;border:1px solid #d2d2d2"></div>
<div class="t" style="left:818px;top:479px;font-size:10px;color:#333">是否已投资</div>
<div class="dd" style="left:905px;top:482px;border-width:4px 3px 0 3px;border-top-color:#222"></div>
<div class="a" style="left:925px;top:474px;width:108px;height:18px;background:#fff;border:1px solid #d2d2d2"></div>
<div class="t" style="left:931px;top:479px;font-size:10px;color:#333">Σ&nbsp; 数值</div>
<div class="dd" style="left:1019px;top:482px;border-width:4px 3px 0 3px;border-top-color:#222"></div>
<div class="a" style="left:812px;top:565px;width:107px;height:18px;background:#fff;border:1px solid #d2d2d2"></div>
<div class="t" style="left:818px;top:570px;font-size:10px;color:#333">投资次数<span class="l">2</span></div>
<div class="dd" style="left:905px;top:573px;border-width:4px 3px 0 3px;border-top-color:#222"></div>
<div class="a" style="left:925px;top:565px;width:108px;height:18px;background:#fff;border:1px solid #d2d2d2"></div>
<div class="t" style="left:931px;top:570px;font-size:10px;color:#333">计数项:星座</div>
<div class="dd" style="left:1019px;top:573px;border-width:4px 3px 0 3px;border-top-color:#222"></div>
<div class="a" style="left:925px;top:584px;width:108px;height:18px;background:#fff;border:1px solid #d2d2d2"></div>
<div class="t" style="left:931px;top:589px;font-size:10px;color:#333">求和项:投资总额</div>
<div class="dd" style="left:1019px;top:592px;border-width:4px 3px 0 3px;border-top-color:#222"></div>
<div class="a" style="left:812.500px;top:647px;width:11px;height:11px;background:#fff;border:1px solid #b0b0b0"></div>
<div class="t" style="left:829px;top:648.500px;font-size:10px;color:#444">推迟布局更新</div>
<div class="a" style="left:1005px;top:643px;width:28px;height:20px;background:#fbfbfb;border:1px solid #dcdcdc"></div>
<div class="t" style="left:1009px;top:648.500px;font-size:10px;color:#b0b0b0">更新</div>
<!-- ============ FORMAT SHAPE PANEL ============ -->
<div class="t" style="left:1052px;top:172px;font-size:18px;color:#217346;font-weight:400">设置形状格式</div>
<div class="dd" style="left:1249px;top:175px;border-width:4px 3.500px 0 3.500px;border-top-color:#555"></div>
<svg style="left:1262px;top:172px" width="8" height="8" viewBox="0 0 8 8"><path d="M.5 .5l7 7M7.500 .5l-7 7" stroke="#444" stroke-width="1.200"/></svg>
<svg style="left:1057px;top:195px" width="19" height="18" viewBox="0 0 19 18"><path d="M7 2l7 7-6 6.500-7-7z" fill="#fff" stroke="#217346" stroke-width="1.400"/><path d="M7 2l-2-2" stroke="#217346" stroke-width="1.400"/><path d="M15 9.500c2 2.500 2.800 4.300 1.500 5.300-1.200.8-2.500-.3-2-2z" fill="#217346"/></svg>
<svg style="left:1088px;top:196px" width="16" height="17" viewBox="0 0 16 17"><path d="M8 .8l7 5.200-2.700 7h-8.600l-2.700-7z" fill="#fff" stroke="#666" stroke-width="1.200"/><path d="M4 15.500h8" stroke="#999" stroke-width="1.500"/></svg>
<svg style="left:1119px;top:195px" width="18" height="18" viewBox="0 0 18 18"><path d="M6 1.500h11M6 0v3M17 0v3M1.500 5v12M0 5h3M0 17h3" stroke="#777" stroke-width="1"/><rect x="6" y="5" width="11" height="12" fill="#555"/><path d="M11.500 7v8M8 11h7" stroke="#fff" stroke-width="1"/></svg>
<svg style="left:1054px;top:219px" width="217" height="8" viewBox="0 0 217 8"><path d="M0 6.500h7l5-5.500 5 5.500h200" fill="none" stroke="#cfcfcf" stroke-width="1"/></svg>
<svg style="left:1059px;top:233px" width="6" height="6" viewBox="0 0 6 6"><path d="M6 0v6h-6z" fill="#444"/></svg>
<div class="t" style="left:1070px;top:232px;font-size:10px;color:#217346;font-weight:bold">填充</div>
<div class="a" style="left:1071px;top:254.5px;width:9px;height:9px;border-radius:50%;background:#fcfcfc;border:1px solid #ececec"></div>
<div class="t" style="left:1084px;top:254.5px;font-size:10px;color:#a6a6a6">无填充(<u>N</u>)</div>
<div class="a" style="left:1071px;top:273.9px;width:9px;height:9px;border-radius:50%;background:#fcfcfc;border:1px solid #ececec"></div>
<div class="t" style="left:1084px;top:273.9px;font-size:10px;color:#a6a6a6">纯色填充(<u>S</u>)</div>
<div class="a" style="left:1071px;top:293.1px;width:9px;height:9px;border-radius:50%;background:#fcfcfc;border:1px solid #ececec"></div>
<div class="t" style="left:1084px;top:293.1px;font-size:10px;color:#a6a6a6">渐变填充(<u>G</u>)</div>
<div class="a" style="left:1071px;top:312.5px;width:9px;height:9px;border-radius:50%;background:#fcfcfc;border:1px solid #ececec"></div>
<div class="t" style="left:1084px;top:312.5px;font-size:10px;color:#a6a6a6">图片或纹理填充(<u>P</u>)</div>
<div class="a" style="left:1071px;top:332.0px;width:9px;height:9px;border-radius:50%;background:#fcfcfc;border:1px solid #ececec"></div>
<div class="t" style="left:1084px;top:332.0px;font-size:10px;color:#a6a6a6">图案填充(<u>A</u>)</div>
<svg style="left:1059px;top:359px" width="6" height="6" viewBox="0 0 6 6"><path d="M6 0v6h-6z" fill="#444"/></svg>
<div class="t" style="left:1070px;top:358px;font-size:10px;color:#217346;font-weight:bold">线条</div>
<div class="a" style="left:1071px;top:380.0px;width:9px;height:9px;border-radius:50%;background:#fcfcfc;border:1px solid #ececec"></div>
<div class="a" style="left:1074px;top:383.0px;width:3px;height:3px;border-radius:50%;background:#9a9a9a"></div>
<div class="t" style="left:1084px;top:380.0px;font-size:10px;color:#a6a6a6">无线条(<u>N</u>)</div>
<div class="a" style="left:1071px;top:399.5px;width:9px;height:9px;border-radius:50%;background:#fcfcfc;border:1px solid #ececec"></div>
<div class="t" style="left:1084px;top:399.5px;font-size:10px;color:#a6a6a6">实线(<u>S</u>)</div>
<div class="a" style="left:1071px;top:418.5px;width:9px;height:9px;border-radius:50%;background:#fcfcfc;border:1px solid #ececec"></div>
<div class="t" style="left:1084px;top:418.5px;font-size:10px;color:#a6a6a6">渐变线(<u>G</u>)</div>
<!-- ============ SHEET TABS ============ -->
<div class="a" style="left:0;top:651px;width:800px;height:19px;background:#e6e6e6;border-top:1px solid #c9c9c9"></div>
<div class="a" style="left:17px;top:658px;border-top:3px solid transparent;border-bottom:3px solid transparent;border-right:4px solid #c3c3c3"></div>
<div class="a" style="left:37px;top:658px;border-top:3px solid transparent;border-bottom:3px solid transparent;border-left:4px solid #217346"></div>
<div class="a" style="left:67px;top:655px;width:1px;height:12px;background:#ababab"></div>
<div class="t" style="left:75px;top:653px;font-size:11px;color:#444"><span class="l">P2P_</span>用户信息汇总</div>
<div class="a" style="left:177px;top:655px;width:1px;height:12px;background:#ababab"></div>
<div class="t" style="left:185px;top:653px;font-size:11px;color:#444"><span class="l">1-</span>用户性别</div>
<div class="a" style="left:250px;top:655px;width:1px;height:12px;background:#ababab"></div>
<div class="t" style="left:258px;top:653px;font-size:11px;color:#444"><span class="l">2-</span>用户年龄</div>
<div class="a" style="left:323px;top:655px;width:1px;height:12px;background:#ababab"></div>
<div class="a" style="left:372px;top:651px;width:61px;height:18px;background:#fff;border-bottom:2px solid #217346"></div>
<div class="t" style="left:388px;top:653px;font-size:11px;color:#217346;width:44px;overflow:hidden">投资频次</div>
<div class="t" style="left:437px;top:651px;font-size:12px;color:#444;font-weight:bold">...</div>
<svg style="left:454px;top:654px" width="14" height="14" viewBox="0 0 14 14"><circle cx="7" cy="7" r="6" fill="none" stroke="#666" stroke-width="1"/><path d="M7 3.500v7M3.500 7h7" stroke="#666" stroke-width="1.200"/></svg>
<div class="a" style="left:479px;top:657px;width:1px;height:1px;background:#999;box-shadow:0 3px 0 #999,0 6px 0 #999"></div>
<div class="a" style="left:490px;top:655px;width:289px;height:13px;background:#d9d9d9"></div>
<div class="a" style="left:490px;top:655px;width:12px;height:13px;background:#fff;border:1px solid #c6c6c6"></div>
<div class="a" style="left:494px;top:659px;border-top:2.500px solid transparent;border-bottom:2.500px solid transparent;border-right:3px solid #444"></div>
<div class="a" style="left:503px;top:655px;width:161px;height:13px;background:#fff;border:1px solid #c6c6c6"></div>
<div class="a" style="left:767px;top:655px;width:12px;height:13px;background:#fff;border:1px solid #c6c6c6"></div>
<div class="a" style="left:772px;top:659px;border-top:2.500px solid transparent;border-bottom:2.500px solid transparent;border-left:3px solid #444"></div>
<!-- ============ STATUS BAR ============ -->
<div class="a" style="left:0;top:670px;width:1280px;height:18px;background:#f1f1f1;border-top:1px solid #d0d0d0"></div>
<div class="t" style="left:4px;top:675px;font-size:10px;color:#444">就绪</div>
<div class="a" style="left:1049px;top:671px;width:27px;height:17px;background:#c9c9c9"></div>
<svg style="left:1057px;top:674px" width="11" height="10" viewBox="0 0 11 10"><rect x=".5" y=".5" width="10" height="9" fill="none" stroke="#666"/><path d="M4 .5v9M7 .5v9M.5 3.500h10M.5 6.500h10" stroke="#777" stroke-width=".7"/></svg>
<svg style="left:1085px;top:674px" width="11" height="10" viewBox="0 0 11 10"><rect x=".5" y=".5" width="10" height="9" fill="none" stroke="#777"/><path d="M3.500 2v6M7.500 2v6M3.500 2.500h4M3.500 7.500h4" fill="none" stroke="#777" stroke-width=".8"/></svg>
<svg style="left:1113px;top:674px" width="10" height="10" viewBox="0 0 10 10"><rect x=".5" y=".5" width="9" height="9" fill="none" stroke="#666"/><path d="M3 .5v4h4v-4" fill="none" stroke="#666" stroke-width=".8"/></svg>
<div class="a" style="left:1135px;top:678px;width:6px;height:2px;background:#444"></div>
<div class="a" style="left:1143px;top:679px;width:84px;height:1px;background:#b5b5b5"></div>
<div class="a" style="left:1184px;top:674px;width:3px;height:10px;background:#444"></div>
<div class="a" style="left:1230px;top:678px;width:8px;height:2px;background:#444"></div><div class="a" style="left:1233px;top:675px;width:2px;height:8px;background:#444"></div>
<div class="t" style="left:1247px;top:673px;font-size:11px;color:#555">100%</div>
<!-- ============ TASKBAR ============ -->
<div class="a" style="left:0;top:688px;width:1280px;height:32px;background:linear-gradient(90deg,#3c7da8 0,#2f76a4 12%,#2c70a5 45%,#26669f 60%,#1d568f 72%,#1a508a 80%,#1a4d86 100%)"></div>
<div class="a" style="left:876px;top:690px;width:22px;height:30px;background:linear-gradient(90deg,rgba(150,190,220,0),rgba(175,208,232,.6) 50%,rgba(150,190,220,0));transform:skewX(58deg)"></div>
<div class="a" style="left:0;top:688px;width:1280px;height:1px;background:#4b6c88"></div>
<div class="a" style="left:0;top:689px;width:1280px;height:1px;background:#6c9cc4"></div>
<!-- start orb -->
<div class="a" style="left:7.500px;top:690px;width:29px;height:28px;border-radius:50%;background:radial-gradient(circle at 50% 30%,#9fd0f0 0,#3d86c4 40%,#174a86 80%,#3f9fd6 100%);border:1px solid #274d70;box-shadow:0 0 2px 1px rgba(190,225,250,.7)"></div>
<svg style="left:13px;top:695.500px" width="19" height="17" viewBox="0 0 19 17"><path d="M1.500 3c2.500-1.500 4.500-1.500 7 0l-1.200 5c-2.300-1.300-4.200-1.300-6.800 0z" fill="#e8502a"/><path d="M9.800 3.300c2.500 1.500 4.500 1.500 7.200 0l-1.200 5c-2.500 1.400-4.600 1.400-7.200 0z" fill="#7fc241"/><path d="M.8 9.300c2.400-1.400 4.400-1.400 6.800 0l-1.200 5c-2.300-1.400-4.200-1.400-6.800 0z" fill="#2d9ee0"/><path d="M8.800 9.600c2.500 1.500 4.600 1.500 7.200 0l-1.200 5c-2.500 1.400-4.600 1.400-7.200 0z" fill="#f9c31f"/></svg>
<!-- 360 browser -->
<div class="a" style="left:59px;top:693px;width:23px;height:23px;border-radius:50%;background:#5cc02c;border:2px solid #dff5d0"></div>
<div class="t" style="left:63px;top:692px;font-size:22px;font-weight:bold;color:#fff;line-height:22px">e</div>
<!-- blue pen -->
<div class="a" style="left:104px;top:691px;width:26px;height:27px;border-radius:6px;background:#3d8bf2"></div>
<svg style="left:109px;top:696px" width="16" height="16" viewBox="0 0 16 16"><path d="M10 1l5 5-7.500 8h-5.500l-1-5.500z" fill="#fff"/><path d="M4 11.500l2-2" stroke="#3d8bf2" stroke-width="1.500"/></svg>
<!-- chrome -->
<div class="a" style="left:151px;top:692px;width:25px;height:25px;border-radius:50%;background:conic-gradient(from -60deg,#e33b2e 0 120deg,#f9c927 120deg 240deg,#38a852 240deg 360deg)"></div>
<div class="a" style="left:158px;top:699px;width:11px;height:11px;border-radius:50%;background:#4a8af4;border:2px solid #fff"></div>
<!-- task buttons -->
<div class="a" style="left:188px;top:689px;width:106px;height:31px;border-radius:2px;background:linear-gradient(180deg,#7aa9c8 0,#5b94b9 45%,#4584ae 52%,#3f7faa 100%);border:1px solid rgba(20,50,80,.6);box-shadow:inset 0 0 0 1px rgba(255,255,255,.25)"></div>
<div class="a" style="left:294px;top:689px;width:106px;height:31px;border-radius:2px;background:linear-gradient(180deg,#76a6c6 0,#5790b6 45%,#4281ac 52%,#3c7ca8 100%);border:1px solid rgba(20,50,80,.6);box-shadow:inset 0 0 0 1px rgba(255,255,255,.25)"></div>
<div class="a" style="left:403px;top:689px;width:105px;height:31px;border-radius:2px;background:linear-gradient(180deg,#b4d0e2 0,#8db5d0 45%,#79a7c7 52%,#6fa0c3 100%);border:1px solid rgba(20,50,80,.6);box-shadow:inset 0 0 0 1px rgba(255,255,255,.4)"></div>
<svg style="left:195px;top:691px" width="20" height="26" viewBox="0 0 20 26"><path d="M1 3l7-2.500v23l-7 2z" fill="#f3d77a"/><path d="M8 .5l3 1.500v23l-3-1.500z" fill="#d9b04a"/><path d="M11 3h7v22h-7z" fill="#f7e08e"/><path d="M1 3l7-2.500v23l-7 2z" fill="none" stroke="#c9a040" stroke-width=".6"/></svg>
<svg style="left:301px;top:691px" width="20" height="26" viewBox="0 0 20 26"><path d="M1 3l7-2.500v23l-7 2z" fill="#f3d77a"/><path d="M8 .5l3 1.500v23l-3-1.500z" fill="#d9b04a"/><path d="M11 3h7v22h-7z" fill="#f7e08e"/><path d="M1 3l7-2.500v23l-7 2z" fill="none" stroke="#c9a040" stroke-width=".6"/></svg>
<div class="t w" style="left:223px;top:699px;font-size:10.3px">第<span class="l">1</span>章_交互...</div>
<div class="t w" style="left:329px;top:699px;font-size:10.3px">屏幕截图</div>
<svg style="left:410px;top:692px" width="25" height="24" viewBox="0 0 25 24"><rect x="9" y="3" width="15" height="18" fill="#fff" stroke="#217346"/><path d="M13 6h9M13 9h9M13 12h9M13 15h9M13 18h9M17 4v16" stroke="#217346" stroke-width="1"/><path d="M0 2.500l14-2.500v24l-14-2.500z" fill="#1e7145"/><path d="M4 7l6 10M10 7l-6 10" stroke="#fff" stroke-width="2"/></svg>
<div class="t w" style="left:438px;top:699px;font-size:10.3px"><span style="font-size:9.500px">EXCEL</span>综合...</div>
<!-- tray -->
<div class="a" style="left:1039px;top:699px;width:13px;height:9px;background:#b8bcc0;border:1px solid #8a8e92;border-radius:1px"></div>
<div class="a" style="left:1057px;top:695px;width:13px;height:13px;border-radius:50%;background:#2b4fd8;border:1px solid #dfe6ff"></div>
<div class="t w" style="left:1060.500px;top:696px;font-size:10px;font-weight:bold">?</div>
<div class="a" style="left:1076px;top:697px;width:5px;height:3px;background:#cfe0f0"></div><div class="dd" style="left:1076px;top:706px;border-top-color:#cfe0f0"></div>
<div class="a" style="left:1089px;top:698px;width:13px;height:13px;background:#e6e6e6"></div><div class="a" style="left:1091px;top:702px;width:9px;height:3px;background:#d8282a"></div><div class="a" style="left:1094px;top:700px;width:3px;height:9px;background:#d8282a"></div>
<div class="a" style="left:1109px;top:699px;width:7px;height:12px;background:#e9eef2;border:1px solid #fff"></div><div class="a" style="left:1118px;top:702px;width:2px;height:7px;background:#fff"></div>
<svg style="left:1128px;top:698px" width="14" height="14" viewBox="0 0 14 14"><path d="M1 4h3l4-3.500v12l-4-3.500h-3z" fill="#f2f2f2"/><circle cx="10" cy="10" r="3.300" fill="#d9231f"/><path d="M8 8l4 4" stroke="#fff" stroke-width="1.200"/></svg>
<div class="a" style="left:1149px;top:698px;width:12px;height:9px;background:#a9a9a9;border:1px solid #777"></div><div class="a" style="left:1153px;top:702px;width:9px;height:9px;border-radius:50%;background:#d4201c"></div>
<div class="a" style="left:1169px;top:698px;width:13px;height:13px;border-radius:50%;background:#d8d929;border:1px solid #8fae12"></div><div class="a" style="left:1172px;top:704px;width:8px;height:2px;background:#15702a"></div><div class="a" style="left:1175px;top:701px;width:2px;height:8px;background:#15702a"></div>
<svg style="left:1190px;top:700px" width="11" height="10" viewBox="0 0 11 10"><path d="M.5 10v-2M3 10v-4M5.500 10v-6M8 10v-8M10.500 10v-10" stroke="#fff" stroke-width="1.500"/></svg>
<div class="t w" style="left:1229px;top:692px;font-size:11px">9:13</div>
<div class="t w" style="left:1214px;top:707px;font-size:11px">2016/2/26</div>
<div class="a" style="left:1270px;top:689px;width:10px;height:31px;background:linear-gradient(180deg,#5580a8,#2a5a8c 40%,#1f4f83);border-left:1px solid #0f3560"></div>
<!-- ============ MINI TOOLBAR ============ -->
<div class="a" style="left:240px;top:354.500px;width:211px;height:45px;background:#f9f9f9;border:1px solid #c6c6c6;box-shadow:0 1px 3px rgba(0,0,0,.18)"></div>
<div class="a" style="left:243px;top:358px;width:53px;height:18px;background:#fff;border:1px solid #c6c6c6"></div>
<div class="t" style="left:245px;top:362px;font-size:10px;color:#444">微软雅黑</div>
<div class="dd" style="left:287px;top:366px"></div>
<div class="a" style="left:295px;top:358px;width:41px;height:18px;background:#fff;border:1px solid #c6c6c6"></div>
<div class="t" style="left:298px;top:361px;font-size:11.500px;color:#444">11</div>
<div class="dd" style="left:327px;top:366px"></div>
<div class="t" style="left:340.500px;top:362.500px;font-size:10.500px;color:#555">A</div><div class="a" style="left:347px;top:362px;border-left:1.500px solid transparent;border-right:1.500px solid transparent;border-bottom:2px solid #555"></div>
<div class="t" style="left:357.500px;top:362.500px;font-size:10.500px;color:#555">A</div><div class="a" style="left:364px;top:362px;border-left:1.500px solid transparent;border-right:1.500px solid transparent;border-top:2px solid #555"></div>
<svg style="left:372px;top:361px" width="13" height="13" viewBox="0 0 13 13"><rect x=".5" y=".5" width="11" height="7" fill="#dbe9f7" stroke="#2b6cb0"/><circle cx="6" cy="4" r="1.800" fill="#2b6cb0"/><ellipse cx="8.500" cy="9" rx="3.500" ry="1.500" fill="#f0c46c"/><ellipse cx="8.500" cy="11" rx="3.500" ry="1.500" fill="#f0c46c"/></svg>
<div class="dd" style="left:389px;top:366px"></div>
<div class="t" style="left:399px;top:361px;font-size:12.500px;color:#555">%</div>
<div class="t" style="left:418px;top:356px;font-size:15px;font-weight:bold;color:#555;font-family:'Liberation Serif',serif">,</div>
<svg style="left:432px;top:361px" width="14" height="13" viewBox="0 0 14 13"><rect x=".5" y=".5" width="13" height="12" fill="#fff" stroke="#71869e"/><path d="M.5 3.500h13M.5 9.500h13M4.500 .5v3M9.500 .5v3M4.500 9.500v3M9.500 9.500v3" stroke="#8a9db3" stroke-width=".8"/><path d="M2.500 6.500h9M4.500 5l-2 1.500 2 1.500M9.500 5l2 1.500-2 1.500" stroke="#4a6c94" stroke-width=".9" fill="none"/></svg>
<div class="t" style="left:247px;top:381px;font-size:11.500px;font-weight:bold;color:#444">B</div>
<div class="t" style="left:265px;top:381px;font-size:11.500px;font-style:italic;font-weight:bold;font-family:'Liberation Serif',serif;color:#444">I</div>
<svg style="left:279px;top:383px" width="12" height="8" viewBox="0 0 12 8"><path d="M0 .5h12M2 2.500h8M0 4.500h12M2 6.500h8" stroke="#7a7a7a" stroke-width=".9"/></svg>
<svg style="left:296px;top:379px" width="14" height="15" viewBox="0 0 14 15"><path d="M4.500 1.500l5 5-4 4-3.500-3.500z" fill="#fff" stroke="#666" stroke-width="1"/><path d="M4.500 1.500v-1" stroke="#666"/><path d="M10.500 6.500c1.500 1.800 2 2.800 1.200 3.500-.7.500-1.500 0-1.300-1z" fill="#2b6cb0"/><rect x="0" y="12" width="13" height="3" fill="#ffef00"/></svg>
<div class="dd" style="left:313px;top:386px"></div>
<div class="t" style="left:324px;top:379px;font-size:12.500px;color:#444">A</div>
<div class="a" style="left:323px;top:391px;width:12px;height:3px;background:#e81123"></div>
<div class="dd" style="left:339px;top:386px"></div>
<svg style="left:349px;top:381px" width="12" height="12" viewBox="0 0 12 12"><rect x=".5" y=".5" width="11" height="11" fill="#fff" stroke="#aaa"/><path d="M6 .5v11M.5 6h11" stroke="#aaa"/></svg>
<div class="dd" style="left:365px;top:386px"></div>
<svg style="left:374px;top:381px" width="13" height="12" viewBox="0 0 13 12"><path d="M.5 3h4.500M2.500 1l-2 2 2 2" fill="none" stroke="#2b6cb0" stroke-width="1.200"/><text x="6.500" y="5.500" font-size="6.500" font-family="Liberation Sans, sans-serif" fill="#555">.0</text><text x="3" y="11.500" font-size="6.500" font-family="Liberation Sans, sans-serif" fill="#555">.00</text></svg>
<svg style="left:393px;top:381px" width="13" height="12" viewBox="0 0 13 12"><text x="3" y="5.500" font-size="6.500" font-family="Liberation Sans, sans-serif" fill="#555">.00</text><path d="M.5 9h4.500M3 7l2 2-2 2" fill="none" stroke="#2b6cb0" stroke-width="1.200"/><text x="6.500" y="11.500" font-size="6.500" font-family="Liberation Sans, sans-serif" fill="#555">.0</text></svg>
<svg style="left:410px;top:380px" width="13" height="13" viewBox="0 0 13 13"><path d="M8 .8l4 4-1.700 1.700-4-4z" fill="#555"/><path d="M5.600 3.200l4 4-4.800 5.200-4.300-4.300z" fill="#e8c381"/></svg>
<!-- ============ CONTEXT MENU ============ -->
<div class="a" style="left:239px;top:411px;width:163px;height:250.500px;background:#fff;border:1px solid #c6c6c6;box-shadow:1px 2px 4px rgba(0,0,0,.2)"></div>
<div class="t" style="left:264px;top:418.3px;font-size:10px;color:#4a4a4a">复制(<u>C</u>)</div>
<div class="t" style="left:264px;top:438.3px;font-size:10px;color:#4a4a4a">设置单元格格式(<u>F</u>)...</div>
<div class="t" style="left:264px;top:458.3px;font-size:10px;color:#4a4a4a">数字格式(<u>T</u>)...</div>
<div class="a" style="left:264px;top:472px;width:136px;height:1px;background:#e1e1e1"></div>
<div class="t" style="left:264px;top:479.3px;font-size:10px;color:#4a4a4a">刷新(<u>R</u>)</div>
<div class="a" style="left:264px;top:494px;width:136px;height:1px;background:#e1e1e1"></div>
<div class="t" style="left:264px;top:501.3px;font-size:10px;color:#4a4a4a">排序(<u>S</u>)</div>
<div class="a" style="left:389px;top:502.5px;border-top:3px solid transparent;border-bottom:3px solid transparent;border-left:3.500px solid #555"></div>
<div class="a" style="left:264px;top:516px;width:136px;height:1px;background:#e1e1e1"></div>
<div class="t" style="left:264px;top:522.3px;font-size:10px;color:#4a4a4a">删除"求和项:投资总额"(<u>V</u>)</div>
<div class="a" style="left:264px;top:537px;width:136px;height:1px;background:#e1e1e1"></div>
<div class="t" style="left:264px;top:543.3px;font-size:10px;color:#4a4a4a">值汇总依据(<u>M</u>)</div>
<div class="a" style="left:389px;top:544.5px;border-top:3px solid transparent;border-bottom:3px solid transparent;border-left:3.500px solid #555"></div>
<div class="t" style="left:264px;top:563.3px;font-size:10px;color:#4a4a4a">值显示方式(<u>A</u>)</div>
<div class="a" style="left:389px;top:564.5px;border-top:3px solid transparent;border-bottom:3px solid transparent;border-left:3.500px solid #555"></div>
<div class="a" style="left:264px;top:578px;width:136px;height:1px;background:#e1e1e1"></div>
<div class="t" style="left:264px;top:584.3px;font-size:10px;color:#4a4a4a">显示详细信息(<u>E</u>)</div>
<div class="a" style="left:264px;top:599.5px;width:136px;height:1px;background:#e1e1e1"></div>
<div class="t" style="left:264px;top:606.3px;font-size:10px;color:#4a4a4a">值字段设置(<u>N</u>)...</div>
<div class="t" style="left:264px;top:626.3px;font-size:10px;color:#4a4a4a">数据透视表选项(<u>O</u>)...</div>
<div class="t" style="left:264px;top:646.3px;font-size:10px;color:#4a4a4a">隐藏字段列表(<u>D</u>)</div>
<svg style="left:244px;top:416px" width="12" height="13" viewBox="0 0 12 13"><path d="M.5 .5h5l2 2v6.500h-7z" fill="#fff" stroke="#888"/><path d="M4.500 3.500h4.500l2.500 2.500v6.500h-7z" fill="#fff" stroke="#888"/><path d="M6 8h4M6 10h4" stroke="#2b6cb0"/></svg>
<svg style="left:244px;top:436px" width="13" height="12" viewBox="0 0 13 12"><rect x=".5" y=".5" width="12" height="11" fill="#fff" stroke="#777"/><path d="M.5 3h12" stroke="#777" stroke-width="1.400"/><path d="M2.500 5.500h2M2.500 7.500h2M2.500 9.500h2" stroke="#2b6cb0"/><path d="M6 5.500h5M6 7.500h5M6 9.500h5" stroke="#999"/></svg>
<svg style="left:244px;top:477px" width="13" height="13" viewBox="0 0 13 13"><path d="M.5 .5h6l2 2v2M.5 .5v12h4" fill="none" stroke="#999"/><path d="M11.500 7a3.500 3.500 0 0 0-6.500-.5M5.500 10a3.500 3.500 0 0 0 6.500 .5" fill="none" stroke="#3a9a5c" stroke-width="1.300"/><path d="M4 5.500l1 2 2-1M13 11.500l-1-2-2 1" fill="none" stroke="#3a9a5c" stroke-width="1"/></svg>
<svg style="left:244px;top:521px" width="12" height="11" viewBox="0 0 12 11"><path d="M.8 .8l10.400 9.400M11.200 .8l-10.400 9.400" stroke="#444" stroke-width="1.500"/></svg>
<svg style="left:244px;top:583px" width="14" height="11" viewBox="0 0 14 11"><path d="M2.500 0v5M0 2.500h5" stroke="#3b6c9a" stroke-width="1.200"/><path d="M6 3h8M8 6.500h6M6 10h8" stroke="#999" stroke-width="1.200"/></svg>
<svg style="left:244px;top:604px" width="14" height="14" viewBox="0 0 14 14"><rect x=".5" y=".5" width="10" height="10" fill="#fff" stroke="#999"/><path d="M.5 3h10" stroke="#888" stroke-width="1.300"/><path d="M3.500 3v7.500" stroke="#aaa"/><circle cx="10" cy="10" r="3.500" fill="#2b6cb0"/><path d="M10 8v.8M10 9.800v2.200" stroke="#fff" stroke-width="1.200"/></svg>
<div class="a" style="left:243px;top:642px;width:16px;height:17px;border:1px solid #a8cdb6;background:#f3f9f5"></div>
<svg style="left:246px;top:645px" width="10" height="12" viewBox="0 0 10 12"><rect x=".5" y=".5" width="9" height="11" fill="#fff" stroke="#777"/><path d="M.5 2h9" stroke="#2b5f8f" stroke-width="2"/><path d="M.5 6h9M.5 9h9M5 3v8.500" stroke="#8a9aa8" stroke-width=".8"/></svg>
</body>
</html>
